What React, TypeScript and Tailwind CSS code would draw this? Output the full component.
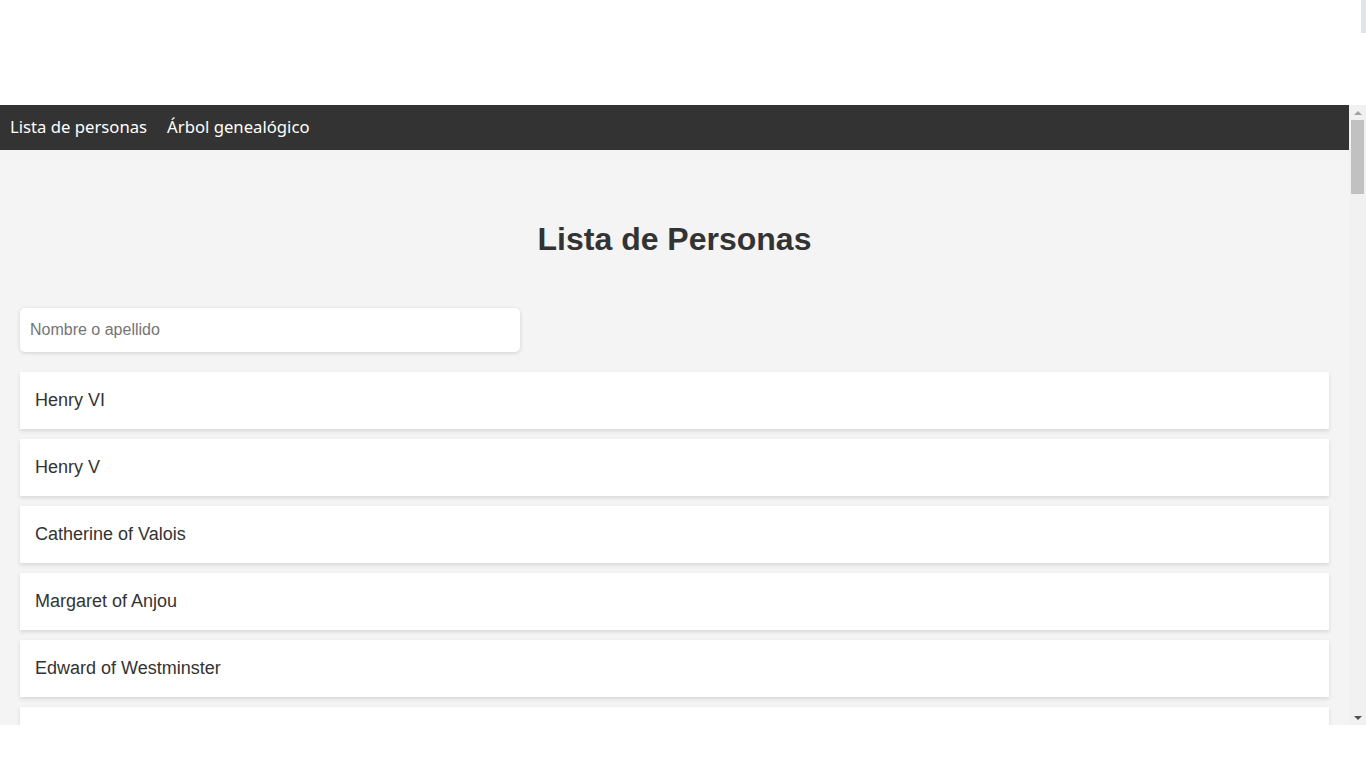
import React from "react";

const people = [
  "Henry VI",
  "Henry V",
  "Catherine of Valois",
  "Margaret of Anjou",
  "Edward of Westminster",
  "",
];

export default function App() {
  return (
    <div className="relative h-[768px] w-full overflow-hidden bg-white">
      <div className="absolute right-0 top-0 h-[33px] w-[5px] bg-[#e2e5e8]" />
      <div className="h-[105px]" />
      <div className="flex h-[620px] w-full">
        <div className="flex-1 overflow-hidden bg-[#f4f4f4]">
          <nav
            className="flex h-[45px] items-center gap-[20px] bg-[#333333] px-[10px] pb-[2px] text-[16.7px] text-white"
            style={{ fontFamily: '"Noto Sans", "Open Sans", sans-serif' }}
          >
            <span>Lista de personas</span>
            <span>Árbol genealógico</span>
          </nav>
          <div
            className="px-[20px] pt-[71px]"
            style={{ fontFamily: '"Liberation Sans", Arial, sans-serif' }}
          >
            <h1 className="text-center text-[32px] font-bold leading-[37px] text-[#333333]">
              Lista de Personas
            </h1>
            <input
              className="mt-[50px] h-[44px] w-[500px] rounded-[5px] bg-white px-[10px] text-[16px] text-[#333333] shadow-[0_1px_4px_rgba(0,0,0,0.15)] outline-none placeholder:text-[#757575]"
              placeholder="Nombre o apellido"
            />
            <div className="mt-[20px] flex flex-col gap-[10px]">
              {people.map((p, i) => (
                <div
                  key={i}
                  className="flex h-[57px] items-center bg-white px-[15px] text-[18px] text-[#333333] shadow-[0_2px_4px_rgba(0,0,0,0.12)]"
                >
                  {p}
                </div>
              ))}
            </div>
          </div>
        </div>
        <div className="flex w-[17px] flex-col items-center bg-[#f1f1f1]">
          <div className="flex h-[15px] items-center justify-center">
            <div className="h-0 w-0 border-x-[4px] border-b-[4px] border-x-transparent border-b-[#a3a3a3]" />
          </div>
          <div className="h-[74px] w-[13px] bg-[#c1c1c1]" />
          <div className="flex-1" />
          <div className="flex h-[15px] items-center justify-center">
            <div className="h-0 w-0 border-x-[4px] border-t-[4px] border-x-transparent border-t-[#505050]" />
          </div>
        </div>
      </div>
    </div>
  );
}
